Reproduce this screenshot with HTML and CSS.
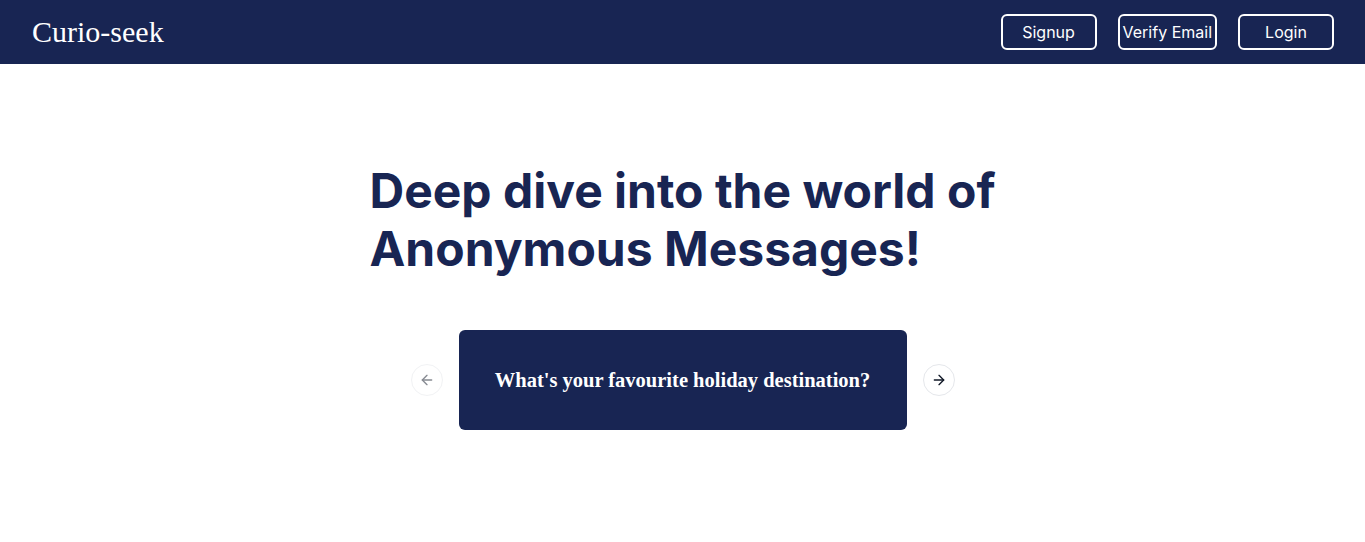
FILE: index.html
```html
<!DOCTYPE html>
<html lang="en">
<head>
<meta charset="utf-8">
<title>Curio-seek</title>
<link rel="stylesheet" href="styles.css">
</head>
<body>
<header class="navbar">
  <a class="brand" href="#">Curio-seek</a>
  <nav class="nav-actions">
    <button class="nav-btn">Signup</button>
    <button class="nav-btn">Verify Email</button>
    <button class="nav-btn">Login</button>
  </nav>
</header>
<main class="hero">
  <h1 class="hero-title">Deep dive into the world of<br>Anonymous Messages!</h1>
  <div class="carousel">
    <button class="arrow arrow-disabled" aria-label="Previous slide">
      <svg width="16" height="16" viewBox="0 0 24 24" fill="none" stroke="currentColor" stroke-width="2" stroke-linecap="round" stroke-linejoin="round"><path d="m12 19-7-7 7-7"/><path d="M19 12H5"/></svg>
    </button>
    <div class="card">
      <p class="card-text">What's your favourite holiday destination?</p>
    </div>
    <button class="arrow" aria-label="Next slide">
      <svg width="16" height="16" viewBox="0 0 24 24" fill="none" stroke="currentColor" stroke-width="2" stroke-linecap="round" stroke-linejoin="round"><path d="M5 12h14"/><path d="m12 5 7 7-7 7"/></svg>
    </button>
  </div>
</main>
</body>
</html>
```

FILE: styles.css
```css
* { box-sizing: border-box; }
html, body { margin: 0; padding: 0; background: #ffffff; }
body { font-family: Inter, "Noto Sans", sans-serif; }

.navbar {
  height: 64px;
  background: #182553;
  display: flex;
  align-items: center;
  justify-content: space-between;
  padding: 0 31px 0 32px;
}
.brand {
  font-family: "Liberation Serif", "Times New Roman", serif;
  font-size: 30px;
  line-height: 36px;
  color: #ffffff;
  text-decoration: none;
}
.nav-actions {
  display: flex;
  gap: 21px;
}
.nav-btn {
  min-width: 96px;
  height: 36px;
  padding: 0 3px;
  border: 2px solid #ffffff;
  border-radius: 6px;
  background: transparent;
  color: #ffffff;
  font-family: Inter, "Noto Sans", sans-serif;
  font-size: 16px;
  font-weight: 400;
  cursor: pointer;
}

.hero {
  display: flex;
  flex-direction: column;
  align-items: center;
  padding-top: 98px;
}
.hero-title {
  margin: 0 0 52px;
  width: max-content;
  font-family: Inter, sans-serif;
  font-weight: 700;
  font-size: 48px;
  line-height: 58px;
  color: #182553;
  text-align: left;
}

.carousel {
  display: flex;
  align-items: center;
  gap: 16px;
}
.arrow {
  width: 32px;
  height: 32px;
  border-radius: 50%;
  border: 1px solid #e5e7eb;
  background: #ffffff;
  color: #111827;
  display: flex;
  align-items: center;
  justify-content: center;
  padding: 0;
}
.arrow-disabled { opacity: 0.5; }
.card {
  width: 448px;
  height: 100px;
  background: #182553;
  border-radius: 6px;
  display: flex;
  align-items: center;
  justify-content: center;
}
.card-text {
  margin: 0;
  font-family: "Liberation Serif", "Times New Roman", serif;
  font-weight: 700;
  font-size: 20.5px;
  color: #ffffff;
}
```
